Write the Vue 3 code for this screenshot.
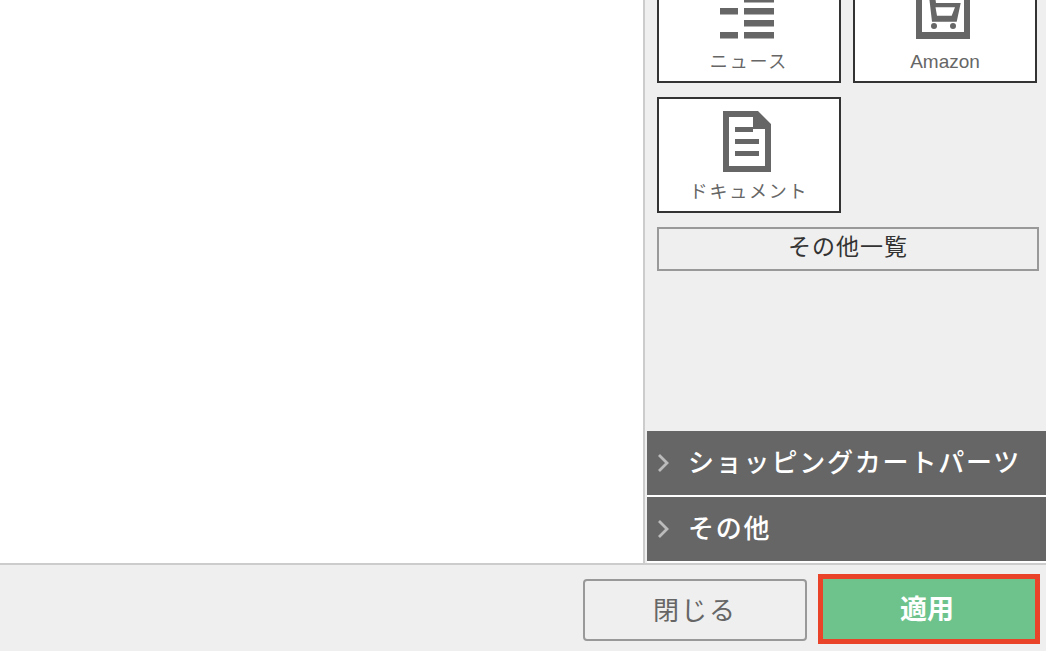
<script setup>
const cards = [
  { label: 'ニュース', icon: 'news' },
  { label: 'Amazon', icon: 'cart' },
  { label: 'ドキュメント', icon: 'doc' }
]
const bars = ['ショッピングカートパーツ', 'その他']
</script>

<template>
  <div class="page">
    <div class="main">
      <div class="canvas"></div>
      <aside class="side">
        <div class="cards">
          <div v-for="c in cards" :key="c.label" class="card" :class="'card-' + c.icon">
            <svg v-if="c.icon === 'news'" class="ico" width="54" height="43" viewBox="0 0 54 43">
              <path fill="#666" d="M0 12h18v6.500H0zM24 0h30v6.500H24zM24 12h30v6.500H24zM24 24h30v6.500H24zM0 36h18v6.500H0zM24 36h30v6.500H24z" />
            </svg>
            <svg v-else-if="c.icon === 'cart'" class="ico" width="54" height="43" viewBox="0 0 54 43">
              <path fill="#666" d="M0 0h6v36h42V0h6v43H0z" />
              <path fill="#666" fill-rule="evenodd" d="M13 0h6l1 7h24.700L40.700 25.700H16zM19.500 11.300l1.500 8.400h14.700l3.300-8.400z" />
              <circle cx="18" cy="30" r="3" fill="#666" />
              <circle cx="37" cy="30" r="3" fill="#666" />
            </svg>
            <svg v-else class="ico" width="48" height="61" viewBox="0 0 48 61">
              <path fill="#666" fill-rule="evenodd" d="M0 0h35l13 13v48H0zM6 6v49h36V18H30V6z" />
              <path fill="#666" d="M12 16h18v5H12zM12 28h24v5H12zM12 40h24v5H12z" />
            </svg>
            <span class="label">{{ c.label }}</span>
          </div>
        </div>
        <div class="more">その他一覧</div>
        <div class="bars">
          <div v-for="b in bars" :key="b" class="bar">
            <svg class="chev" width="12" height="20" viewBox="0 0 12 20">
              <path d="M2 2l8 8-8 8" fill="none" stroke="#bbb" stroke-width="2.800" />
            </svg>
            <span class="bar-text">{{ b }}</span>
          </div>
        </div>
      </aside>
    </div>
    <footer class="foot">
      <button class="btn close"><span class="btn-text">閉じる</span></button>
      <button class="btn apply"><span class="btn-text">適用</span></button>
    </footer>
  </div>
</template>

<style scoped>
.page {
  width: 1046px;
  height: 651px;
  overflow: hidden;
  display: flex;
  flex-direction: column;
  background: #efefef;
  font-family: "Noto Sans CJK JP", "Liberation Sans", sans-serif;
}
.main {
  flex: 1;
  min-height: 0;
  display: flex;
}
.canvas {
  width: 643px;
  background: #fff;
}
.side {
  flex: 1;
  min-width: 0;
  border-left: 2px solid #ccc;
  display: flex;
  flex-direction: column;
  overflow: hidden;
}
.cards {
  margin: -33px 0 0 12px;
  display: grid;
  grid-template-columns: 184px 184px;
  column-gap: 12px;
  row-gap: 14px;
}
.card {
  height: 116px;
  box-sizing: border-box;
  border: 2px solid #333;
  background: #fff;
  display: flex;
  flex-direction: column;
  align-items: center;
}
.ico {
  display: block;
  margin-left: -4px;
}
.label {
  font-size: 18px;
  line-height: 26px;
  letter-spacing: 1.800px;
  color: #666;
}
.card-news .ico,
.card-cart .ico {
  margin-top: 27px;
}
.card-news .label {
  margin-top: 8px;
}
.card-cart .label {
  font-family: "Liberation Sans", sans-serif;
  font-size: 19px;
  letter-spacing: 0;
  margin-top: 10px;
}
.card-doc .ico {
  margin-top: 12px;
}
.card-doc .label {
  margin-top: 5px;
}
.more {
  margin: 14px 7px 0 12px;
  height: 44px;
  box-sizing: border-box;
  border: 2px solid #999;
  text-align: center;
  font-size: 23px;
  line-height: 32px;
  letter-spacing: 1px;
  color: #333;
}
.bars {
  margin-top: auto;
  padding-left: 2px;
}
.bar {
  height: 64px;
  background: #666;
  border-bottom: 2px solid #fff;
  display: flex;
  align-items: center;
  color: #fff;
}
.bar-text {
  font-size: 26px;
  font-weight: 500;
  letter-spacing: 1.800px;
  margin-top: -5px;
}
.chev {
  margin: 0 19px 0 10px;
  flex: none;
}
.foot {
  height: 88px;
  flex: none;
  box-sizing: border-box;
  border-top: 2px solid #ccc;
  display: flex;
  justify-content: flex-end;
  align-items: center;
  gap: 11px;
  padding: 9px 6px 7px 0;
}
.btn {
  font-family: inherit;
  padding: 0 0 4px;
  box-sizing: border-box;
  cursor: pointer;
}
.close {
  width: 224px;
  height: 62px;
  margin-top: 2px;
  background: #efefef;
  border: 2px solid #999;
  border-radius: 4px;
  color: #666;
  font-size: 26px;
  letter-spacing: 2px;
}
.apply {
  width: 222px;
  height: 70px;
  padding-right: 4px;
  background: #6ec38c;
  border: 5px solid #e9432a;
  color: #fff;
  font-size: 27px;
  font-weight: 700;
}
</style>
